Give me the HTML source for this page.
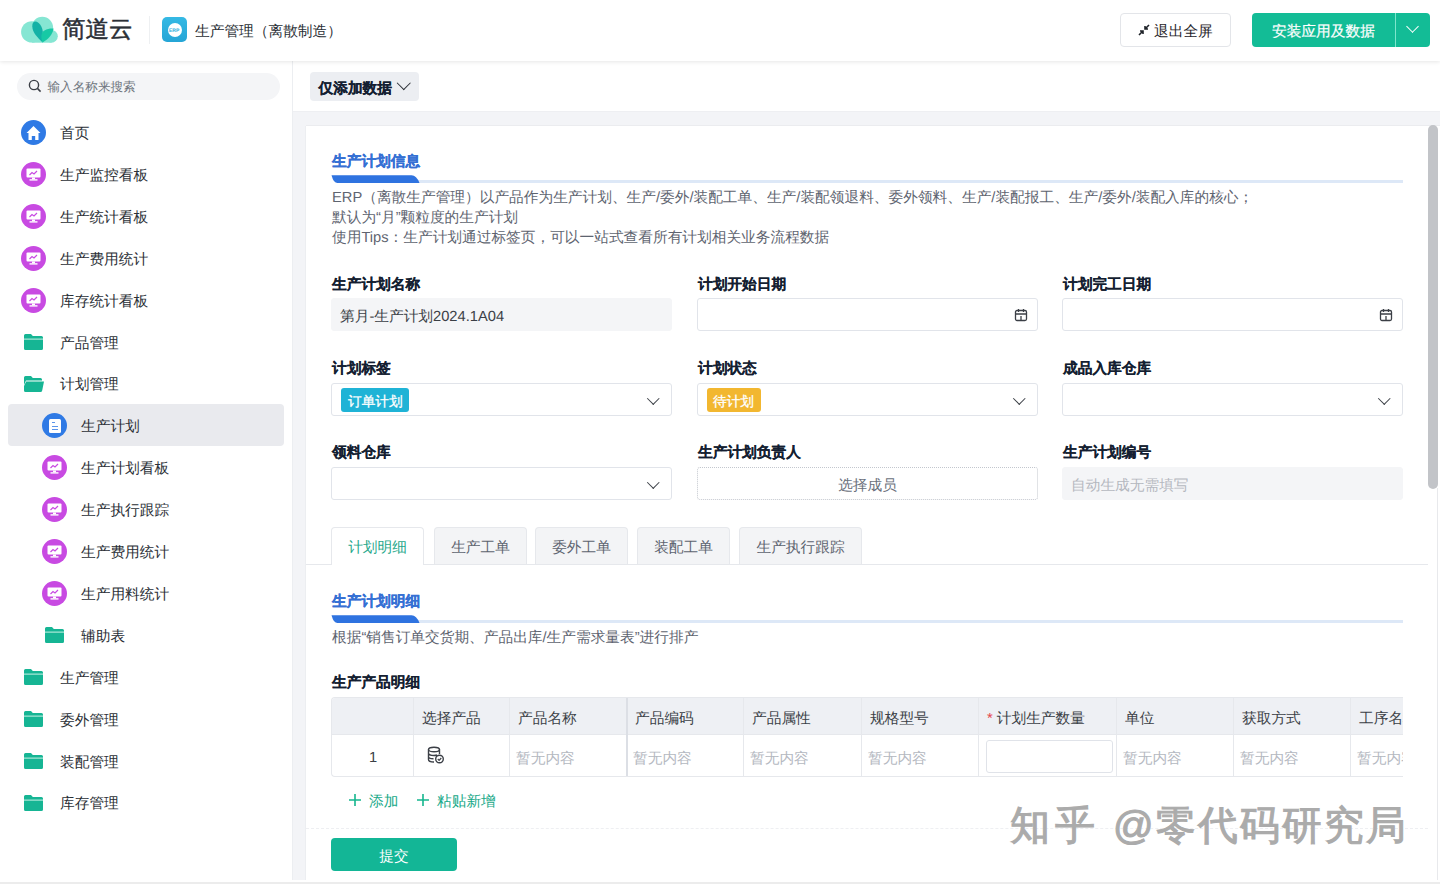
<!DOCTYPE html>
<html><head><meta charset="utf-8"><style>
*{box-sizing:border-box;margin:0;padding:0}
html,body{width:1440px;height:884px;overflow:hidden;background:#f3f4f7;font-family:"Liberation Sans",sans-serif;color:#141e31;font-size:14.7px;text-rendering:geometricPrecision}
.a{position:absolute}
.t{position:absolute;white-space:nowrap;line-height:20px;padding-top:1.5px}
.ic{position:absolute;width:25px;height:25px;border-radius:50%}
.inp{position:absolute;height:33px;border:1px solid #e1e4ea;border-radius:3px;background:#fff}
.chev{position:absolute;width:8px;height:8px;border-style:solid;border-width:0 1.4px 1.4px 0;transform:rotate(45deg)}
</style></head><body>
<div class="a" style="left:0;top:0;width:1440px;height:61px;background:#fff;box-shadow:0 1px 4px rgba(0,0,0,.10);z-index:5">
<svg class="a" style="left:15px;top:10px" width="45" height="36" viewBox="0 0 45 36">
<g fill="#86e6d3"><circle cx="16.8" cy="21.9" r="10.7"/><circle cx="27.3" cy="17.6" r="10.8"/><circle cx="36.4" cy="26.3" r="6.4"/><rect x="16.8" y="20" width="19.6" height="12.7"/></g>
<path d="M27.6 32.4 C22 27 17.5 22.5 17.3 16.5 C17.2 13 18.5 11.3 20.5 11.4 C24 11.8 27.3 16 27.8 21.8 Z" fill="#13b2a6"/>
<path d="M27.6 32.4 C25.5 27 26 22.5 29.5 20.5 C32.5 18.8 35.5 18.3 38.6 18.6 C37.5 24.5 33.5 29.5 27.6 32.4 Z" fill="#17c9a5"/>
</svg>
<div class="t" style="left:62px;top:11.5px;font-size:23.5px;line-height:32px;-webkit-text-stroke:0.5px #2b2f36;color:#2b2f36">简道云</div>
<div class="a" style="left:149px;top:16px;width:1px;height:28px;background:#eef0f2"></div>
<div class="a" style="left:162px;top:17px;width:25px;height:25px;border-radius:5px;background:linear-gradient(180deg,#35b9e4,#25a5d6)"></div>
<div class="a" style="left:167.5px;top:22.5px;width:14px;height:14px;border-radius:50%;background:#fff"></div>
<div class="t" style="left:169px;top:26px;font-size:5px;line-height:7px;color:#2fb0dd;font-weight:bold">ERP</div>
<div class="t" style="left:195px;top:20px;font-size:14.7px;color:#2b2f36">生产管理（离散制造）</div>
<div class="a" style="left:1120px;top:13px;width:111px;height:34px;border:1px solid #e3e5e9;border-radius:4px;background:#fff"></div>
<svg class="a" style="left:1137px;top:23px" width="14" height="14" viewBox="0 0 14 14"><path d="M2 12 L6 8 M3 8 L6 8 L6 11 M12 2 L8 6 M8 3 L8 6 L11 6" stroke="#1f2329" stroke-width="1.6" fill="none"/></svg>
<div class="t" style="left:1154px;top:20px;font-size:14.7px;color:#1f2329">退出全屏</div>
<div class="a" style="left:1252px;top:13px;width:178px;height:34px;border-radius:4px;background:#13bc96"></div>
<div class="a" style="left:1395px;top:13px;width:1px;height:34px;background:#7ee6cc"></div>
<div class="t" style="left:1272px;top:20px;font-size:14.7px;-webkit-text-stroke:0.2px #fff;color:#fff">安装应用及数据</div>
<div class="chev" style="left:1407.5px;top:21.5px;width:9px;height:9px;border-width:0 1.8px 1.8px 0;border-color:#fff"></div>
</div>
<div class="a" style="left:0;top:61px;width:293px;height:823px;background:#fff;border-right:1px solid #eceef1">
<div class="a" style="left:17px;top:12px;width:263px;height:27px;border-radius:13.5px;background:#f4f5f7"></div>
<svg class="a" style="left:28px;top:18px" width="14" height="14" viewBox="0 0 14 14"><circle cx="6" cy="6" r="4.6" stroke="#3b3f46" stroke-width="1.4" fill="none"/><path d="M9.4 9.4 L12.6 12.6" stroke="#3b3f46" stroke-width="1.5"/></svg>
<div class="t" style="left:47.5px;top:14px;font-size:12.6px;color:#6f757e">输入名称来搜索</div>
<div class="ic" style="left:21px;top:59.00px;background:#2f7ae5"><svg class="a" style="left:5px;top:4.5px" width="15" height="16" viewBox="0 0 15 16"><path d="M7.5 1 L14.5 8 L12.5 8 L12.5 15 L9.2 15 L9.2 11 L5.8 11 L5.8 15 L2.5 15 L2.5 8 L0.5 8 Z" fill="#fff"/></svg></div>
<div class="t" style="left:60px;top:61.50px;font-size:14.7px;color:#2b2f36">首页</div>
<div class="ic" style="left:21px;top:100.90px;background:#c84ae2"><svg class="a" style="left:5px;top:6px" width="15" height="13" viewBox="0 0 15 13"><rect x="0.5" y="0.5" width="14" height="9" rx="1" fill="#fff"/><rect x="6" y="9.5" width="3" height="1.8" fill="#fff"/><rect x="3.5" y="11.2" width="8" height="1.4" fill="#fff"/><path d="M3.5 7 L6 4.5 L8 6 L11 3" stroke="#c84ae2" stroke-width="1.2" fill="none"/></svg></div>
<div class="t" style="left:60px;top:103.40px;font-size:14.7px;color:#2b2f36">生产监控看板</div>
<div class="ic" style="left:21px;top:142.80px;background:#c84ae2"><svg class="a" style="left:5px;top:6px" width="15" height="13" viewBox="0 0 15 13"><rect x="0.5" y="0.5" width="14" height="9" rx="1" fill="#fff"/><rect x="6" y="9.5" width="3" height="1.8" fill="#fff"/><rect x="3.5" y="11.2" width="8" height="1.4" fill="#fff"/><path d="M3.5 7 L6 4.5 L8 6 L11 3" stroke="#c84ae2" stroke-width="1.2" fill="none"/></svg></div>
<div class="t" style="left:60px;top:145.30px;font-size:14.7px;color:#2b2f36">生产统计看板</div>
<div class="ic" style="left:21px;top:184.70px;background:#c84ae2"><svg class="a" style="left:5px;top:6px" width="15" height="13" viewBox="0 0 15 13"><rect x="0.5" y="0.5" width="14" height="9" rx="1" fill="#fff"/><rect x="6" y="9.5" width="3" height="1.8" fill="#fff"/><rect x="3.5" y="11.2" width="8" height="1.4" fill="#fff"/><path d="M3.5 7 L6 4.5 L8 6 L11 3" stroke="#c84ae2" stroke-width="1.2" fill="none"/></svg></div>
<div class="t" style="left:60px;top:187.20px;font-size:14.7px;color:#2b2f36">生产费用统计</div>
<div class="ic" style="left:21px;top:226.60px;background:#c84ae2"><svg class="a" style="left:5px;top:6px" width="15" height="13" viewBox="0 0 15 13"><rect x="0.5" y="0.5" width="14" height="9" rx="1" fill="#fff"/><rect x="6" y="9.5" width="3" height="1.8" fill="#fff"/><rect x="3.5" y="11.2" width="8" height="1.4" fill="#fff"/><path d="M3.5 7 L6 4.5 L8 6 L11 3" stroke="#c84ae2" stroke-width="1.2" fill="none"/></svg></div>
<div class="t" style="left:60px;top:229.10px;font-size:14.7px;color:#2b2f36">库存统计看板</div>
<svg class="a" style="left:24px;top:273.00px" width="19" height="16" viewBox="0 0 19 16"><path d="M0 1.5 Q0 0 1.5 0 L7 0 L8.8 2 L17.5 2 Q19 2 19 3.5 L19 14.5 Q19 16 17.5 16 L1.5 16 Q0 16 0 14.5 Z" fill="#16b594"/><rect x="0" y="4.6" width="19" height="1" fill="#c9f2e6"/></svg>
<div class="t" style="left:60px;top:271.00px;font-size:14.7px;color:#2b2f36">产品管理</div>
<svg class="a" style="left:24px;top:314.90px" width="20" height="16" viewBox="0 0 20 16"><path d="M0 1.5 Q0 0 1.5 0 L7 0 L8.8 2 L16.5 2 Q18 2 18 3.5 L18 4.5 L2 4.5 L0 9 Z" fill="#16b594"/><path d="M2.2 5.6 L20 5.6 L18.2 14.5 Q17.9 16 16.5 16 L1.5 16 Q0 16 0 14.5 L0 10 Z" fill="#16b594"/></svg>
<div class="t" style="left:60px;top:312.90px;font-size:14.7px;color:#2b2f36">计划管理</div>
<div class="a" style="left:8px;top:343.30px;width:276px;height:42px;border-radius:4px;background:#e9eaee"></div>
<div class="ic" style="left:42px;top:352.30px;background:#2f7ae5"><div class="a" style="left:6.5px;top:5.5px;width:12px;height:14px;border-radius:1.5px;background:#fff"></div><div class="a" style="left:9.5px;top:8.7px;width:3px;height:1.2px;background:#5c95ea"></div><div class="a" style="left:9.5px;top:12.3px;width:6px;height:1.2px;background:#5c95ea"></div><div class="a" style="left:9.5px;top:15.3px;width:6px;height:1.2px;background:#5c95ea"></div></div>
<div class="t" style="left:81px;top:354.80px;font-size:14.7px;color:#2b2f36">生产计划</div>
<div class="ic" style="left:42px;top:394.20px;background:#c84ae2"><svg class="a" style="left:5px;top:6px" width="15" height="13" viewBox="0 0 15 13"><rect x="0.5" y="0.5" width="14" height="9" rx="1" fill="#fff"/><rect x="6" y="9.5" width="3" height="1.8" fill="#fff"/><rect x="3.5" y="11.2" width="8" height="1.4" fill="#fff"/><path d="M3.5 7 L6 4.5 L8 6 L11 3" stroke="#c84ae2" stroke-width="1.2" fill="none"/></svg></div>
<div class="t" style="left:81px;top:396.70px;font-size:14.7px;color:#2b2f36">生产计划看板</div>
<div class="ic" style="left:42px;top:436.10px;background:#c84ae2"><svg class="a" style="left:5px;top:6px" width="15" height="13" viewBox="0 0 15 13"><rect x="0.5" y="0.5" width="14" height="9" rx="1" fill="#fff"/><rect x="6" y="9.5" width="3" height="1.8" fill="#fff"/><rect x="3.5" y="11.2" width="8" height="1.4" fill="#fff"/><path d="M3.5 7 L6 4.5 L8 6 L11 3" stroke="#c84ae2" stroke-width="1.2" fill="none"/></svg></div>
<div class="t" style="left:81px;top:438.60px;font-size:14.7px;color:#2b2f36">生产执行跟踪</div>
<div class="ic" style="left:42px;top:478.00px;background:#c84ae2"><svg class="a" style="left:5px;top:6px" width="15" height="13" viewBox="0 0 15 13"><rect x="0.5" y="0.5" width="14" height="9" rx="1" fill="#fff"/><rect x="6" y="9.5" width="3" height="1.8" fill="#fff"/><rect x="3.5" y="11.2" width="8" height="1.4" fill="#fff"/><path d="M3.5 7 L6 4.5 L8 6 L11 3" stroke="#c84ae2" stroke-width="1.2" fill="none"/></svg></div>
<div class="t" style="left:81px;top:480.50px;font-size:14.7px;color:#2b2f36">生产费用统计</div>
<div class="ic" style="left:42px;top:519.90px;background:#c84ae2"><svg class="a" style="left:5px;top:6px" width="15" height="13" viewBox="0 0 15 13"><rect x="0.5" y="0.5" width="14" height="9" rx="1" fill="#fff"/><rect x="6" y="9.5" width="3" height="1.8" fill="#fff"/><rect x="3.5" y="11.2" width="8" height="1.4" fill="#fff"/><path d="M3.5 7 L6 4.5 L8 6 L11 3" stroke="#c84ae2" stroke-width="1.2" fill="none"/></svg></div>
<div class="t" style="left:81px;top:522.40px;font-size:14.7px;color:#2b2f36">生产用料统计</div>
<svg class="a" style="left:45px;top:566.30px" width="19" height="16" viewBox="0 0 19 16"><path d="M0 1.5 Q0 0 1.5 0 L7 0 L8.8 2 L17.5 2 Q19 2 19 3.5 L19 14.5 Q19 16 17.5 16 L1.5 16 Q0 16 0 14.5 Z" fill="#16b594"/><rect x="0" y="4.6" width="19" height="1" fill="#c9f2e6"/></svg>
<div class="t" style="left:81px;top:564.30px;font-size:14.7px;color:#2b2f36">辅助表</div>
<svg class="a" style="left:24px;top:608.20px" width="19" height="16" viewBox="0 0 19 16"><path d="M0 1.5 Q0 0 1.5 0 L7 0 L8.8 2 L17.5 2 Q19 2 19 3.5 L19 14.5 Q19 16 17.5 16 L1.5 16 Q0 16 0 14.5 Z" fill="#16b594"/><rect x="0" y="4.6" width="19" height="1" fill="#c9f2e6"/></svg>
<div class="t" style="left:60px;top:606.20px;font-size:14.7px;color:#2b2f36">生产管理</div>
<svg class="a" style="left:24px;top:650.10px" width="19" height="16" viewBox="0 0 19 16"><path d="M0 1.5 Q0 0 1.5 0 L7 0 L8.8 2 L17.5 2 Q19 2 19 3.5 L19 14.5 Q19 16 17.5 16 L1.5 16 Q0 16 0 14.5 Z" fill="#16b594"/><rect x="0" y="4.6" width="19" height="1" fill="#c9f2e6"/></svg>
<div class="t" style="left:60px;top:648.10px;font-size:14.7px;color:#2b2f36">委外管理</div>
<svg class="a" style="left:24px;top:692.00px" width="19" height="16" viewBox="0 0 19 16"><path d="M0 1.5 Q0 0 1.5 0 L7 0 L8.8 2 L17.5 2 Q19 2 19 3.5 L19 14.5 Q19 16 17.5 16 L1.5 16 Q0 16 0 14.5 Z" fill="#16b594"/><rect x="0" y="4.6" width="19" height="1" fill="#c9f2e6"/></svg>
<div class="t" style="left:60px;top:690.00px;font-size:14.7px;color:#2b2f36">装配管理</div>
<svg class="a" style="left:24px;top:733.90px" width="19" height="16" viewBox="0 0 19 16"><path d="M0 1.5 Q0 0 1.5 0 L7 0 L8.8 2 L17.5 2 Q19 2 19 3.5 L19 14.5 Q19 16 17.5 16 L1.5 16 Q0 16 0 14.5 Z" fill="#16b594"/><rect x="0" y="4.6" width="19" height="1" fill="#c9f2e6"/></svg>
<div class="t" style="left:60px;top:731.90px;font-size:14.7px;color:#2b2f36">库存管理</div>
</div>
<div class="a" style="left:293px;top:61px;width:1147px;height:50px;background:#fff">
<div class="a" style="left:17px;top:11px;width:109px;height:29px;border-radius:4px;background:#eceef2"></div>
<div class="t" style="left:25.5px;top:16.5px;font-size:14.7px;font-weight:bold;-webkit-text-stroke:0.15px #141e31;color:#141e31">仅添加数据</div>
<div class="chev" style="left:106px;top:17px;width:9.5px;height:9.5px;border-color:#2b2f36;border-width:0 1.6px 1.6px 0"></div>
</div>
<div class="a" style="left:293px;top:111px;width:1147px;height:1px;background:#eeeff2"></div>
<div class="a" style="left:306px;top:126px;width:1134px;height:754px;background:#fff;box-shadow:-1px 0 0 #eceef1,0 -1px 0 #ebecef">
<div class="t" style="left:26px;top:24px;font-weight:bold;-webkit-text-stroke:0.25px #3570d4;color:#3570d4">生产计划信息</div>
<div class="a" style="left:104px;top:53.5px;width:993px;height:3px;background:#dde8f7"></div>
<svg class="a" style="left:25px;top:49px" width="89" height="8" viewBox="0 0 89 8"><path d="M0.5 0.2 L80.5 0.2 Q85.5 0.2 88.5 8 L6.5 8 Q2.5 8 0.5 0.2 Z" fill="#2f73e0"/></svg>
<div class="t" style="left:26px;top:60px;color:#5e6470">ERP（离散生产管理）以产品作为生产计划、生产/委外/装配工单、生产/装配领退料、委外领料、生产/装配报工、生产/委外/装配入库的核心；</div>
<div class="t" style="left:26px;top:80px;color:#5e6470">默认为“月”颗粒度的生产计划</div>
<div class="t" style="left:26px;top:100px;color:#5e6470">使用Tips：生产计划通过标签页，可以一站式查看所有计划相关业务流程数据</div>
<div class="t" style="left:26px;top:147px;font-weight:bold;-webkit-text-stroke:0.1px #141e31;color:#141e31">生产计划名称</div>
<div class="inp" style="left:25px;top:172px;width:341px;background:#f4f5f7;border-color:#f4f5f7"><div class="t" style="left:8px;top:6px;color:#3b3f46">第月-生产计划2024.1A04</div></div>
<div class="t" style="left:392px;top:147px;font-weight:bold;-webkit-text-stroke:0.1px #141e31;color:#141e31">计划开始日期</div>
<div class="inp" style="left:391px;top:172px;width:341px"><svg class="a" style="right:9px;top:9px" width="14" height="14" viewBox="0 0 14 14"><rect x="1.5" y="2.5" width="11" height="10" rx="1.5" stroke="#3b3f46" stroke-width="1.3" fill="none"/><path d="M1.5 6 L12.5 6 M4.5 1 L4.5 4 M9.5 1 L9.5 4 M7 8 L7 12.5" stroke="#3b3f46" stroke-width="1.3"/></svg></div>
<div class="t" style="left:757px;top:147px;font-weight:bold;-webkit-text-stroke:0.1px #141e31;color:#141e31">计划完工日期</div>
<div class="inp" style="left:756px;top:172px;width:341px"><svg class="a" style="right:9px;top:9px" width="14" height="14" viewBox="0 0 14 14"><rect x="1.5" y="2.5" width="11" height="10" rx="1.5" stroke="#3b3f46" stroke-width="1.3" fill="none"/><path d="M1.5 6 L12.5 6 M4.5 1 L4.5 4 M9.5 1 L9.5 4 M7 8 L7 12.5" stroke="#3b3f46" stroke-width="1.3"/></svg></div>
<div class="t" style="left:26px;top:231px;font-weight:bold;-webkit-text-stroke:0.1px #141e31;color:#141e31">计划标签</div>
<div class="inp" style="left:25px;top:257px;width:341px"><div class="a" style="left:9px;top:4px;width:68px;height:24px;border-radius:3px;background:#1fb3d6"></div><div class="t" style="left:16px;top:6.5px;font-size:13.65px;-webkit-text-stroke:0.3px #fff;color:#fff">订单计划</div><div class="chev" style="right:14px;top:9.5px;width:8.5px;height:8.5px;border-color:#3b3f46"></div></div>
<div class="t" style="left:392px;top:231px;font-weight:bold;-webkit-text-stroke:0.1px #141e31;color:#141e31">计划状态</div>
<div class="inp" style="left:391px;top:257px;width:341px"><div class="a" style="left:9px;top:4px;width:54px;height:24px;border-radius:3px;background:#f2b730"></div><div class="t" style="left:15px;top:6.5px;font-size:13.65px;-webkit-text-stroke:0.3px #fff;color:#fff">待计划</div><div class="chev" style="right:14px;top:9.5px;width:8.5px;height:8.5px;border-color:#3b3f46"></div></div>
<div class="t" style="left:757px;top:231px;font-weight:bold;-webkit-text-stroke:0.1px #141e31;color:#141e31">成品入库仓库</div>
<div class="inp" style="left:756px;top:257px;width:341px"><div class="chev" style="right:14px;top:9.5px;width:8.5px;height:8.5px;border-color:#3b3f46"></div></div>
<div class="t" style="left:26px;top:315px;font-weight:bold;-webkit-text-stroke:0.1px #141e31;color:#141e31">领料仓库</div>
<div class="inp" style="left:25px;top:341px;width:341px"><div class="chev" style="right:14px;top:9.5px;width:8.5px;height:8.5px;border-color:#3b3f46"></div></div>
<div class="t" style="left:392px;top:315px;font-weight:bold;-webkit-text-stroke:0.1px #141e31;color:#141e31">生产计划负责人</div>
<div class="inp" style="left:391px;top:341px;width:341px;border:1px dotted #c3c7ce"><div class="t" style="left:0;width:100%;text-align:center;top:6px;color:#6b717c">选择成员</div></div>
<div class="t" style="left:757px;top:315px;font-weight:bold;-webkit-text-stroke:0.1px #141e31;color:#141e31">生产计划编号</div>
<div class="inp" style="left:756px;top:341px;width:341px;background:#f4f5f7;border-color:#f4f5f7"><div class="t" style="left:8px;top:6px;color:#b4b8bf">自动生成无需填写</div></div>
<div class="a" style="left:0px;top:438px;width:1122px;height:1px;background:#e6e8ec"></div>
<div class="a" style="left:25px;top:401px;width:93px;height:38px;border:1px solid #e6e8ec;border-bottom:none;border-radius:4px 4px 0 0;background:#fff"></div>
<div class="t" style="left:25px;top:410px;width:93px;text-align:center;color:#1fa88b">计划明细</div>
<div class="a" style="left:128px;top:401px;width:93px;height:37px;border:1px solid #e6e8ec;border-bottom:none;border-radius:4px 4px 0 0;background:#f3f4f6"></div>
<div class="t" style="left:128px;top:410px;width:93px;text-align:center;color:#5e6470">生产工单</div>
<div class="a" style="left:229px;top:401px;width:93px;height:37px;border:1px solid #e6e8ec;border-bottom:none;border-radius:4px 4px 0 0;background:#f3f4f6"></div>
<div class="t" style="left:229px;top:410px;width:93px;text-align:center;color:#5e6470">委外工单</div>
<div class="a" style="left:331px;top:401px;width:93px;height:37px;border:1px solid #e6e8ec;border-bottom:none;border-radius:4px 4px 0 0;background:#f3f4f6"></div>
<div class="t" style="left:331px;top:410px;width:93px;text-align:center;color:#5e6470">装配工单</div>
<div class="a" style="left:433px;top:401px;width:123px;height:37px;border:1px solid #e6e8ec;border-bottom:none;border-radius:4px 4px 0 0;background:#f3f4f6"></div>
<div class="t" style="left:433px;top:410px;width:123px;text-align:center;color:#5e6470">生产执行跟踪</div>
<div class="t" style="left:26px;top:464px;font-weight:bold;-webkit-text-stroke:0.25px #3570d4;color:#3570d4">生产计划明细</div>
<div class="a" style="left:104px;top:493.5px;width:993px;height:3px;background:#dde8f7"></div>
<svg class="a" style="left:25px;top:489px" width="89" height="8" viewBox="0 0 89 8"><path d="M0.5 0.2 L80.5 0.2 Q85.5 0.2 88.5 8 L6.5 8 Q2.5 8 0.5 0.2 Z" fill="#2f73e0"/></svg>
<div class="t" style="left:26px;top:500px;color:#5e6470">根据“销售订单交货期、产品出库/生产需求量表”进行排产</div>
<div class="t" style="left:26px;top:545px;font-weight:bold;-webkit-text-stroke:0.1px #141e31;color:#141e31">生产产品明细</div>
<div class="a" style="left:25px;top:571px;width:1072px;height:80px;border:1px solid #e6e8ec;border-right:none;border-radius:4px 0 0 4px;overflow:hidden;background:#fff">
<div class="a" style="left:0;top:0;width:1072px;height:36px;background:#eef0f4"></div>
<div class="t" style="left:0;width:82px;text-align:center;top:48px;color:#3b3f46">1</div>
<div class="a" style="left:81px;top:0;width:1px;height:80px;background:#e6e8ec"></div>
<div class="t" style="left:90px;top:9px;color:#3b3f46">选择产品</div>
<svg class="a" style="left:95px;top:48px" width="18" height="18" viewBox="0 0 18 18"><ellipse cx="7" cy="3.5" rx="5.5" ry="2.3" stroke="#3b3f46" stroke-width="1.4" fill="none"/><path d="M1.5 3.5 L1.5 13.5 Q1.5 16 7 16 M12.5 3.5 L12.5 8 M1.5 7 Q1.5 9.5 7 9.5 Q9 9.5 10 9 M1.5 10.5 Q1.5 12.8 6.5 12.8" stroke="#3b3f46" stroke-width="1.4" fill="none"/><circle cx="12.5" cy="13" r="3.8" stroke="#3b3f46" stroke-width="1.4" fill="#fff"/><path d="M10.8 13 L12.1 14.3 L14.3 12" stroke="#3b3f46" stroke-width="1.2" fill="none"/></svg>
<div class="a" style="left:177px;top:0;width:1px;height:80px;background:#e6e8ec"></div>
<div class="t" style="left:186px;top:9px;color:#3b3f46">产品名称</div>
<div class="t" style="left:184px;top:49px;color:#b4b8bf">暂无内容</div>
<div class="a" style="left:294px;top:0;width:1px;height:80px;background:#e6e8ec"></div>
<div class="t" style="left:303px;top:9px;color:#3b3f46">产品编码</div>
<div class="t" style="left:301px;top:49px;color:#b4b8bf">暂无内容</div>
<div class="a" style="left:411px;top:0;width:1px;height:80px;background:#e6e8ec"></div>
<div class="t" style="left:420px;top:9px;color:#3b3f46">产品属性</div>
<div class="t" style="left:418px;top:49px;color:#b4b8bf">暂无内容</div>
<div class="a" style="left:529px;top:0;width:1px;height:80px;background:#e6e8ec"></div>
<div class="t" style="left:538px;top:9px;color:#3b3f46">规格型号</div>
<div class="t" style="left:536px;top:49px;color:#b4b8bf">暂无内容</div>
<div class="a" style="left:646px;top:0;width:1px;height:80px;background:#e6e8ec"></div>
<div class="t" style="left:655px;top:9px;color:#3b3f46"><span style="color:#e5484d">*</span> 计划生产数量</div>
<div class="a" style="left:654px;top:42px;width:127px;height:33px;border:1px solid #e0e3e9;border-radius:3px;background:#fff"></div>
<div class="a" style="left:784px;top:0;width:1px;height:80px;background:#e6e8ec"></div>
<div class="t" style="left:793px;top:9px;color:#3b3f46">单位</div>
<div class="t" style="left:791px;top:49px;color:#b4b8bf">暂无内容</div>
<div class="a" style="left:901px;top:0;width:1px;height:80px;background:#e6e8ec"></div>
<div class="t" style="left:910px;top:9px;color:#3b3f46">获取方式</div>
<div class="t" style="left:908px;top:49px;color:#b4b8bf">暂无内容</div>
<div class="a" style="left:1018px;top:0;width:1px;height:80px;background:#e6e8ec"></div>
<div class="t" style="left:1027px;top:9px;color:#3b3f46">工序名称</div>
<div class="t" style="left:1025px;top:49px;color:#b4b8bf">暂无内容</div>
<div class="a" style="left:0;top:36px;width:1072px;height:1px;background:#e6e8ec"></div>
<div class="a" style="left:294px;top:0;width:2px;height:79px;background:#dcdfe5"></div>
</div>
<svg class="a" style="left:42px;top:667px" width="14" height="14" viewBox="0 0 14 14"><path d="M7 1 L7 13 M1 7 L13 7" stroke="#16b68e" stroke-width="1.6"/></svg>
<div class="t" style="left:63px;top:664px;color:#16a887">添加</div>
<svg class="a" style="left:110px;top:667px" width="14" height="14" viewBox="0 0 14 14"><path d="M7 1 L7 13 M1 7 L13 7" stroke="#16b68e" stroke-width="1.6"/></svg>
<div class="t" style="left:131px;top:664px;color:#16a887">粘贴新增</div>
<div class="a" style="left:0px;top:702px;width:1122px;height:0;border-top:1px dashed #eeeff2"></div>
<div class="a" style="left:25px;top:712px;width:126px;height:33px;border-radius:4px;background:#13b696"></div>
<div class="t" style="left:25px;top:719px;width:126px;text-align:center;color:#fff">提交</div>
</div>
<div class="a" style="left:1437px;top:488px;width:1px;height:392px;background:#e8e9ec"></div>
<div class="a" style="left:1428px;top:125px;width:9.5px;height:364px;border-radius:5px;background:#c2c4c8"></div>
<div class="a" style="left:0;top:880px;width:1440px;height:4px;background:#fff;border-bottom:2px solid #ececec"></div>
<div class="t" style="left:1010px;top:800px;font-size:40px;line-height:52px;font-weight:normal;-webkit-text-stroke:1.1px #ababab;letter-spacing:2px;color:#ababab;padding:0"><span style="letter-spacing:5px">知乎</span> @零代码研究局</div>
</body></html>
